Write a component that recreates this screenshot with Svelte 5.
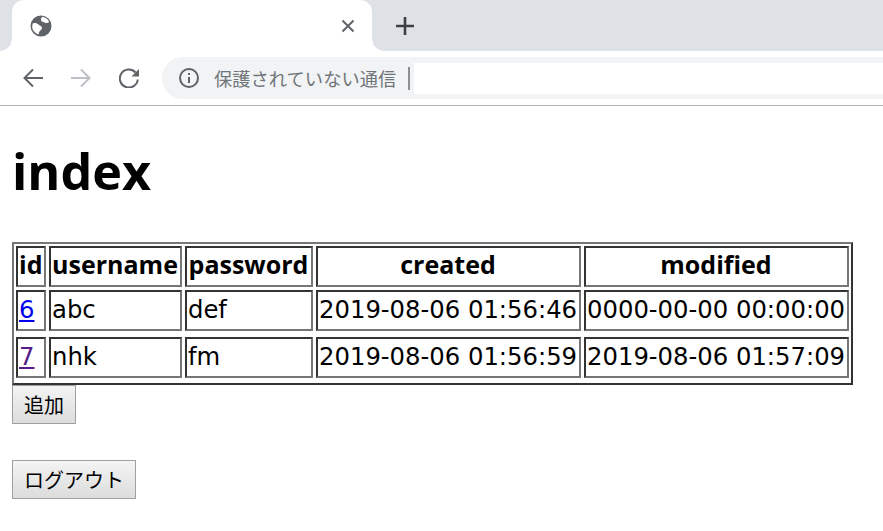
<script>
  const rows = [
    { id: 6, username: "abc", password: "def", created: "2019-08-06 01:56:46", modified: "0000-00-00 00:00:00", visited: false },
    { id: 7, username: "nhk", password: "fm", created: "2019-08-06 01:56:59", modified: "2019-08-06 01:57:09", visited: true }
  ];
</script>

<div class="browser">
  <div class="tabstrip">
    <div class="tab">
      <svg class="globe" width="22" height="22" viewBox="0 0 22 22">
        <circle cx="11" cy="11" r="10.500" fill="#5f6368" />
        <path d="M2.500 8.500c2.500-1 4.500-.5 6 1s3.500 1.500 3.500 3.500-2.500 2.500-3 4.500l-.5 2c-3-1-5.500-3.500-6.300-6.500z" fill="#fff" />
        <path d="M12.500 1.800c3 .5 5.500 2.500 6.700 5.200-1.500 1-3.200 1.500-4.700.5s-3.300-.5-3.500-2.500.5-2 1.500-3.200z" fill="#fff" />
      </svg>
      <svg class="close" width="14" height="14" viewBox="0 0 14 14">
        <path d="M1.500 1.500l11 11M12.500 1.500l-11 11" stroke="#5f6368" stroke-width="2" fill="none" />
      </svg>
    </div>
    <svg class="plus" width="18" height="18" viewBox="0 0 18 18">
      <path d="M9 0v18M0 9h18" stroke="#3c4043" stroke-width="2.600" fill="none" />
    </svg>
  </div>
  <div class="toolbar">
    <svg width="20" height="20" viewBox="0 0 20 20">
      <path d="M20 10H2M10 1.500L1.500 10l8.500 8.500" stroke="#5f6368" stroke-width="2" fill="none" />
    </svg>
    <svg width="20" height="20" viewBox="0 0 20 20">
      <path d="M0 10h18M10 1.500l8.500 8.500-8.500 8.500" stroke="#bdc1c6" stroke-width="2" fill="none" />
    </svg>
    <svg width="20" height="20" viewBox="0 0 20 20">
      <path d="M16.500 4.500a9 9 0 1 0 2.300 7" stroke="#5f6368" stroke-width="2" fill="none" />
      <path d="M20 1v7.500h-7.500z" fill="#5f6368" />
    </svg>
    <div class="omnibox">
      <svg width="20" height="20" viewBox="0 0 20 20">
        <circle cx="10" cy="10" r="9" stroke="#5f6368" stroke-width="2" fill="none" />
        <path d="M9 9h2v6H9zM9 5h2v2H9z" fill="#5f6368" />
      </svg>
      <span class="security">保護されていない通信</span>
      <span class="sep"></span>
      <div class="url"></div>
    </div>
  </div>
</div>

<main>
  <h1>index</h1>
  <div class="frame">
    <table>
      <colgroup>
        <col class="c-id" />
        <col class="c-user" />
        <col class="c-pass" />
        <col class="c-date" />
        <col class="c-date" />
      </colgroup>
      <thead>
        <tr>
          <th>id</th>
          <th>username</th>
          <th>password</th>
          <th>created</th>
          <th>modified</th>
        </tr>
      </thead>
      <tbody>
        {#each rows as row, i}
          {#if i > 0}
            <tr class="spacer"><td colspan="5"></td></tr>
          {/if}
          <tr>
            <td><a href="#{row.id}" class:visited={row.visited}>{row.id}</a></td>
            <td>{row.username}</td>
            <td>{row.password}</td>
            <td>{row.created}</td>
            <td>{row.modified}</td>
          </tr>
        {/each}
      </tbody>
    </table>
  </div>
  <button type="button">追加</button>
  <button type="button" class="logout">ログアウト</button>
</main>

<style>
  :global(body) {
    background: #fff;
    overflow: hidden;
  }

  .browser {
    height: 106px;
    box-sizing: border-box;
    border-bottom: 1px solid #b4b4b4;
  }

  .tabstrip {
    height: 51px;
    background: #dee1e6;
    display: flex;
    align-items: center;
  }

  .tab {
    position: relative;
    width: 360px;
    height: 51px;
    margin-left: 12px;
    box-sizing: border-box;
    padding: 0 17px 0 18px;
    background: #fff;
    border-radius: 12px 12px 0 0;
    display: flex;
    align-items: center;
    justify-content: space-between;
  }

  .tab::before,
  .tab::after {
    content: "";
    position: absolute;
    bottom: 0;
    width: 12px;
    height: 12px;
    background: radial-gradient(circle at 0 0, #dee1e6 11.500px, #fff 12px);
  }

  .tab::before {
    left: -12px;
  }

  .tab::after {
    right: -12px;
    background: radial-gradient(circle at 100% 0, #dee1e6 11.500px, #fff 12px);
  }

  .plus {
    margin-left: 24px;
  }

  .toolbar {
    height: 54px;
    display: flex;
    align-items: center;
    padding-left: 23px;
    gap: 28px;
  }

  .omnibox {
    flex: 1;
    height: 42px;
    margin-left: -5px;
    padding-left: 17px;
    background: #f1f3f4;
    border-radius: 21px 0 0 21px;
    display: flex;
    align-items: center;
  }

  .security {
    margin-left: 15px;
    font-family: "Noto Sans CJK JP", sans-serif;
    font-size: 18.300px;
    color: #70757a;
    white-space: nowrap;
  }

  .sep {
    width: 2px;
    height: 23px;
    margin-left: 12px;
    background: #8d8f92;
  }

  .url {
    flex: 1;
    height: 31px;
    margin-left: 4px;
    background: #fff;
  }

  main {
    padding: 0 12px;
    font-family: "DejaVu Sans", "Noto Sans CJK JP", sans-serif;
  }

  h1 {
    margin: 0;
    padding-top: 37px;
    height: 136px;
    box-sizing: border-box;
    font-family: "Open Sans", sans-serif;
    font-size: 50.300px;
    line-height: 56px;
    font-weight: 700;
    color: #000;
  }

  .frame {
    width: 841px;
    box-sizing: border-box;
    padding-bottom: 2px;
    border-style: solid;
    border-width: 2px;
    border-color: #767676 #333 #333 #767676;
  }

  table {
    width: 839px;
    margin: -1px -1px 0;
    table-layout: fixed;
    border-collapse: separate;
    border-spacing: 3px;
    font-size: 24.300px;
    line-height: 28px;
    color: #000;
  }

  .c-id {
    width: 30px;
  }

  .c-user {
    width: 133px;
  }

  .c-pass {
    width: 128px;
  }

  .c-date {
    width: 265px;
  }

  th,
  td {
    height: 41px;
    box-sizing: border-box;
    padding: 0 1px 1px;
    border-style: solid;
    border-width: 2px;
    border-color: #333 #767676 #767676 #333;
    text-align: left;
    white-space: nowrap;
  }

  th {
    padding: 0 2px 5px 1px;
    text-align: center;
    font-family: "Open Sans", sans-serif;
    font-size: 25px;
    font-weight: 700;
  }

  .spacer td {
    height: 0;
    padding: 0;
    border: 0;
    line-height: 0;
  }

  a {
    color: #0000ee;
  }

  a.visited {
    color: #551a8b;
  }

  button {
    display: block;
    height: 39px;
    padding: 0 11px;
    border: 1px solid #a0a0a0;
    border-radius: 0;
    background: linear-gradient(#f4f4f4, #dcdcdc);
    font-family: "Noto Sans CJK JP", sans-serif;
    font-size: 20px;
    color: #000;
  }

  .logout {
    margin-top: 36px;
  }
</style>
